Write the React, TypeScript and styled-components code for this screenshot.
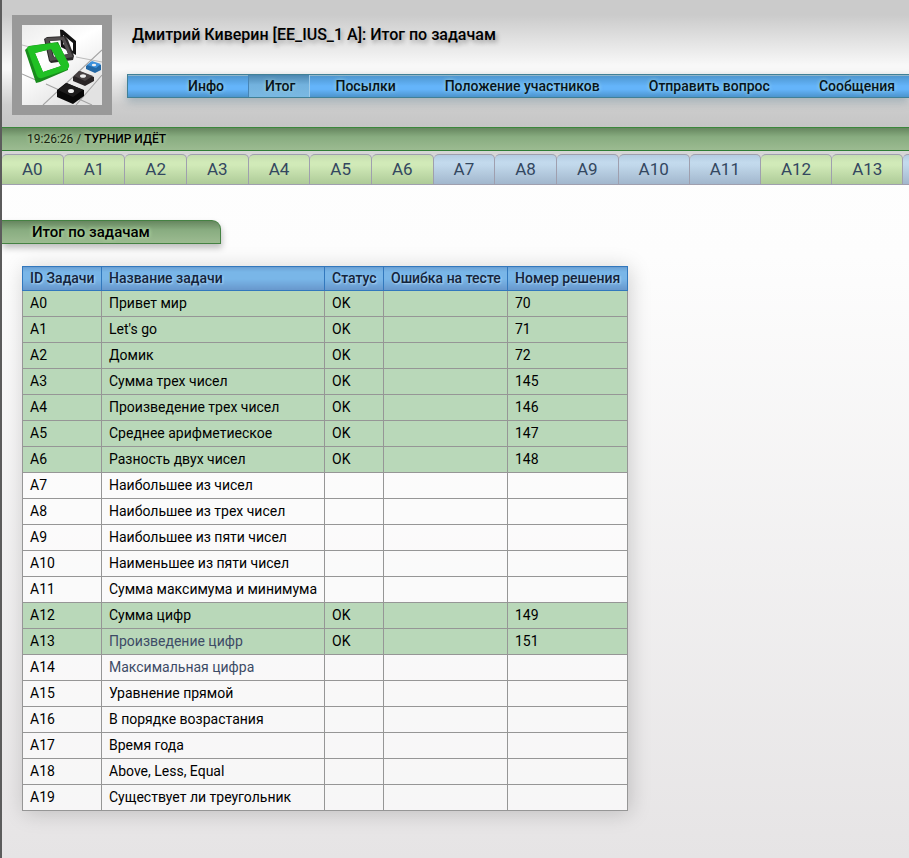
import React from "react";
import styled, { createGlobalStyle } from "styled-components";

const GlobalStyle = createGlobalStyle`
  * { box-sizing: border-box; }
  body {
    margin: 0;
    font-family: Roboto, "Liberation Sans", sans-serif;
    font-size: 14px;
    color: #000;
  }
  a { color: inherit; text-decoration: none; }
`;

const Page = styled.div`
  min-height: 100vh;
  overflow: hidden;
  border-left: 2px solid #5c5c5c;
  background: linear-gradient(#fff 0%, #fdfdfd 30%, #e6e4e5 100%);
`;

const Header = styled.header`
  display: flex;
  gap: 15px;
  height: 127px;
  padding: 15px 0 0 10px;
  background: linear-gradient(#cbcbcb 0, #cbcbcb 15px, #f8f8f8 65px, #f8f8f8 70px, #cdcdcd 105px, #c5c5c5 127px);
`;

const LogoLink = styled.a`
  flex: none;
  width: 100px;
  height: 100px;
  padding: 10px;
  background: #999;
  svg { display: block; width: 80px; height: 80px; }
`;

const HeaderMain = styled.div`
  flex: 1;
  min-width: 0;
`;

const Title = styled.h1`
  margin: 0;
  padding: 10px 5px 0;
  height: 59px;
  font-size: 16px;
  line-height: 20px;
  font-weight: 500;
  white-space: nowrap;
  text-shadow: 2px 3px 4px rgba(0, 0, 0, 0.3);
`;

const Menu = styled.nav`
  display: flex;
  height: 24px;
  padding-left: 35px;
  border: 1px solid #408096;
  border-right: 0;
  background: linear-gradient(#4c94cc, #64b4fa 50%, #64b4fa 65%, #4c94cc);
  box-shadow: inset 0 1px #8fb6cb, 0 4px 8px rgba(70, 110, 130, 0.35);
`;

const MenuItem = styled.a<{ $active?: boolean }>`
  flex: none;
  padding: 0 ${(p) => (p.$active ? 14 : 24)}px 0 ${(p) => (p.$active ? 16 : 25)}px;
  font-size: 14px;
  line-height: 23px;
  font-weight: 500;
  white-space: nowrap;
  color: #07141b;
  text-shadow: 0 0 4px rgba(200, 240, 220, 0.7);
  ${(p) =>
    p.$active &&
    `border-left: 1px solid #4784b4;
     border-right: 1px solid #9fcbe9;
     background: linear-gradient(#4b87b0, #73b2de 45%, #7ab9e2);
     `}
`;

const StatusBar = styled.div`
  height: 24px;
  padding-left: 25px;
  border-top: 1px solid #3b873b;
  border-bottom: 1px solid #2f7d35;
  background: linear-gradient(#66865f, #88ac80 40%, #9cbb91);
  font-size: 12px;
  line-height: 22px;
  color: #18220f;
  text-shadow: 0 0 4px rgba(220, 250, 200, 0.7);
  strong { font-weight: 500; color: #000; }
`;

const Tabs = styled.nav`
  display: flex;
  height: 34px;
  padding-top: 3px;
  background: #d6d6d6;
`;

const Tab = styled.a<{ $solved: boolean }>`
  flex: none;
  height: 31px;
  padding: 0 20px;
  border: 1px solid #9f9fae;
  border-left-width: 0;
  border-radius: 5px 5px 0 0;
  background: ${(p) =>
    p.$solved
      ? "linear-gradient(#c5ddb0, #d1eab8 25%, #d1eab8 35%, #aecb98)"
      : "linear-gradient(#b4cce1, #c3daed 25%, #c1d8eb 35%, #a2b7cd)"};
  font-size: 17px;
  line-height: 29px;
  color: #33475f;
`;

const Section = styled.h2`
  width: 219px;
  height: 24px;
  margin: 35px 0 22px;
  padding-left: 30px;
  border: 1px solid #458243;
  border-left: 0;
  border-radius: 0 9px 0 0;
  background: linear-gradient(#66865f, #88ac80 40%, #9cbb91);
  box-shadow: 1px 4px 6px rgba(0, 0, 0, 0.25);
  font-size: 15px;
  line-height: 23px;
  font-weight: 500;
  text-shadow: 0 0 4px rgba(210, 255, 190, 0.9);
`;

const ResultTable = styled.table`
  margin-left: 20px;
  border-collapse: collapse;
  background: rgba(255, 255, 255, 0.65);
  box-shadow: 2px 2px 20px rgba(0, 0, 0, 0.18);
`;

const HeadCell = styled.th<{ $width: number }>`
  width: ${(p) => p.$width}px;
  height: 24px;
  padding: 0 6px 0 7px;
  border: 1px solid #3278bd;
  background: linear-gradient(#6da4d8, #79b6e8 20%, #79b6e8 50%, #6796cb);
  font-size: 14px;
  line-height: 23px;
  font-weight: 500;
  text-align: left;
  white-space: nowrap;
  color: #13243c;
  text-shadow: 1px 1px 2px rgba(220, 240, 255, 0.6);
`;

const Row = styled.tr<{ $solved: boolean }>`
  background: ${(p) => (p.$solved ? "#b9d8b9" : "transparent")};
`;

const Cell = styled.td`
  height: 26px;
  padding: 0 6px 0 7px;
  border: 1px solid #969696;
  font-size: 14px;
  line-height: 25px;
  white-space: nowrap;
`;

const TaskLink = styled.a<{ $muted: boolean }>`
  color: ${(p) => (p.$muted ? "#3d4b66" : "#000")};
`;

const menu = ["Инфо", "Итог", "Посылки", "Положение участников", "Отправить вопрос", "Сообщения"];

const tasks: [string, string][] = [
  ["Привет мир", "70"],
  ["Let's go", "71"],
  ["Домик", "72"],
  ["Сумма трех чисел", "145"],
  ["Произведение трех чисел", "146"],
  ["Среднее арифметиеское", "147"],
  ["Разность двух чисел", "148"],
  ["Наибольшее из чисел", ""],
  ["Наибольшее из трех чисел", ""],
  ["Наибольшее из пяти чисел", ""],
  ["Наименьшее из пяти чисел", ""],
  ["Сумма максимума и минимума", ""],
  ["Сумма цифр", "149"],
  ["Произведение цифр", "151"],
  ["Максимальная цифра", ""],
  ["Уравнение прямой", ""],
  ["В порядке возрастания", ""],
  ["Время года", ""],
  ["Above, Less, Equal", ""],
  ["Существует ли треугольник", ""],
];

const columns: [string, number][] = [
  ["ID Задачи", 79],
  ["Название задачи", 223],
  ["Статус", 59],
  ["Ошибка на тесте", 124],
  ["Номер решения", 120],
];

function Logo() {
  return (
    <svg viewBox="0 0 80 80" aria-hidden="true">
      <defs>
        <linearGradient id="floor" x1="0" y1="0" x2="0.6" y2="1">
          <stop offset="0" stopColor="#ececec" />
          <stop offset="0.45" stopColor="#fff" />
          <stop offset="1" stopColor="#e2e2e2" />
        </linearGradient>
      </defs>
      <rect width="80" height="80" fill="url(#floor)" />
      <g stroke="#a4a4a4" fill="none">
        <path d="M0 20 8 22M54 32 80 37" strokeWidth="0.7" />
        <path d="M0 49 16 56M24 59 70 80M80 25 21 80M80 50 54 80" strokeWidth="1.1" />
      </g>
      <path fillRule="evenodd" fill="#111" d="M38 5Q38 4 41 5L54 16V30L39 22ZM41 10V19L51 26V18Z" />
      <path fillRule="evenodd" fill="#2b2929" d="M22 14 25 12 43 11 46 15 52 31 51 35 29 38 27 36ZM28 16 32 32 46 29 41 15Z" />
      <path fillRule="evenodd" fill="#514d4e" d="M23 13 42 12 51 32 28 36ZM27 16 31 32 46 29 40 15Z" />
      <path fillRule="evenodd" fill="#188c1c" d="M3 25 7 21 36 17 46 38 46 45 18 57 14 58ZM13 28 21 47 39 41 29 24Z" />
      <path fillRule="evenodd" fill="#20c124" d="M5 23Q6 21 9 21L31 18Q35 17 37 20L47 39Q48 43 44 45L20 53Q17 54 15 51ZM13 28 21 47 39 41 29 24Z" />
      <path fill="#2368a5" d="M64 41 69 37 79 40V45L73 48 64 44Z" />
      <path fill="#3d91dc" d="M65 40 70 36 79 39 74 43Z" />
      <ellipse cx="72" cy="40" rx="2.2" ry="1.2" fill="#eee" />
      <path fill="#292526" d="M51 52 57 46 72 52V56L63 61 51 56Z" />
      <path fill="#474142" d="M52 51 58 46 71 51 63 56Z" />
      <ellipse cx="61" cy="51" rx="3" ry="1.8" fill="#eee" />
      <path fill="#080808" d="M35 65 44 58 62 65V71L51 79 35 72Z" />
      <path fill="#1c1b1b" d="M36 65 45 58 61 65 51 72Z" />
      <ellipse cx="49" cy="66" rx="3" ry="2" fill="#eee" />
    </svg>
  );
}

export default function App() {
  return (
    <>
      <GlobalStyle />
      <Page>
        <Header>
          <LogoLink href="#" aria-label="ejudge">
            <Logo />
          </LogoLink>
          <HeaderMain>
            <Title>Дмитрий Киверин [EE_IUS_1 A]: Итог по задачам</Title>
            <Menu>
              {menu.map((label) => (
                <MenuItem key={label} href="#" $active={label === "Итог"}>
                  {label}
                </MenuItem>
              ))}
            </Menu>
          </HeaderMain>
        </Header>
        <StatusBar>
          19:26:26 / <strong>ТУРНИР ИДЁТ</strong>
        </StatusBar>
        <Tabs>
          {tasks.slice(0, 15).map(([name, run], i) => (
            <Tab key={name} href="#" $solved={run !== ""}>
              A{i}
            </Tab>
          ))}
        </Tabs>
        <main>
          <Section>Итог по задачам</Section>
          <ResultTable>
            <thead>
              <tr>
                {columns.map(([label, width]) => (
                  <HeadCell key={label} $width={width} scope="col">
                    {label}
                  </HeadCell>
                ))}
              </tr>
            </thead>
            <tbody>
              {tasks.map(([name, run], i) => (
                <Row key={name} $solved={run !== ""}>
                  <Cell>A{i}</Cell>
                  <Cell>
                    <TaskLink href="#" $muted={i === 13 || i === 14}>
                      {name}
                    </TaskLink>
                  </Cell>
                  <Cell>{run && "OK"}</Cell>
                  <Cell />
                  <Cell>{run}</Cell>
                </Row>
              ))}
            </tbody>
          </ResultTable>
        </main>
      </Page>
    </>
  );
}
